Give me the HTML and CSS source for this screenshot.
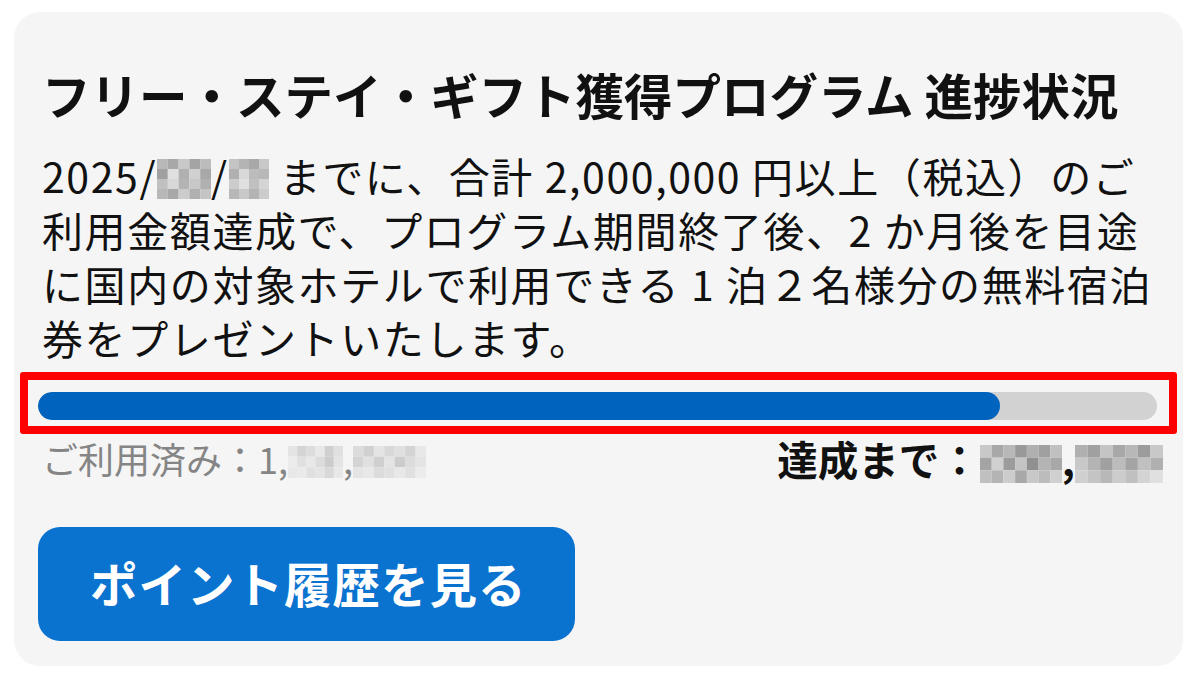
FILE: index.html
```html
<!DOCTYPE html>
<html lang="ja">
<head>
<meta charset="utf-8">
<title>フリー・ステイ・ギフト獲得プログラム 進捗状況</title>
<link rel="stylesheet" href="styles.css">
</head>
<body>
<div class="card">
  <h1 class="title">フリー・ステイ・ギフト獲得プログラム 進捗状況</h1>
  <p class="desc">2025/<svg class="mosaic m-a" width="54" height="40" viewBox="0 0 5 4" preserveAspectRatio="none"><rect x="0" y="0" width="1" height="1" fill="#b8b8b8"/><rect x="1" y="0" width="1" height="1" fill="#a8a8a8"/><rect x="2" y="0" width="1" height="1" fill="#c8c8c8"/><rect x="3" y="0" width="1" height="1" fill="#a4a4a4"/><rect x="4" y="0" width="1" height="1" fill="#bcbcbc"/><rect x="0" y="1" width="1" height="1" fill="#a0a0a0"/><rect x="1" y="1" width="1" height="1" fill="#e0e0e0"/><rect x="2" y="1" width="1" height="1" fill="#b0b0b0"/><rect x="3" y="1" width="1" height="1" fill="#d0d0d0"/><rect x="4" y="1" width="1" height="1" fill="#a8a8a8"/><rect x="0" y="2" width="1" height="1" fill="#c0c0c0"/><rect x="1" y="2" width="1" height="1" fill="#d8d8d8"/><rect x="2" y="2" width="1" height="1" fill="#b4b4b4"/><rect x="3" y="2" width="1" height="1" fill="#c8c8c8"/><rect x="4" y="2" width="1" height="1" fill="#b0b0b0"/><rect x="0" y="3" width="1" height="1" fill="#b8b8b8"/><rect x="1" y="3" width="1" height="1" fill="#a8a8a8"/><rect x="2" y="3" width="1" height="1" fill="#cccccc"/><rect x="3" y="3" width="1" height="1" fill="#b0b0b0"/><rect x="4" y="3" width="1" height="1" fill="#c4c4c4"/></svg>/<svg class="mosaic m-b" width="40" height="40" viewBox="0 0 4 4" preserveAspectRatio="none"><rect x="0" y="0" width="1" height="1" fill="#c4c4c4"/><rect x="1" y="0" width="1" height="1" fill="#b4b4b4"/><rect x="2" y="0" width="1" height="1" fill="#a8a8a8"/><rect x="3" y="0" width="1" height="1" fill="#c8c8c8"/><rect x="0" y="1" width="1" height="1" fill="#b0b0b0"/><rect x="1" y="1" width="1" height="1" fill="#d8d8d8"/><rect x="2" y="1" width="1" height="1" fill="#bcbcbc"/><rect x="3" y="1" width="1" height="1" fill="#b8b8b8"/><rect x="0" y="2" width="1" height="1" fill="#cccccc"/><rect x="1" y="2" width="1" height="1" fill="#e0e0e0"/><rect x="2" y="2" width="1" height="1" fill="#c0c0c0"/><rect x="3" y="2" width="1" height="1" fill="#d4d4d4"/><rect x="0" y="3" width="1" height="1" fill="#b8b8b8"/><rect x="1" y="3" width="1" height="1" fill="#c8c8c8"/><rect x="2" y="3" width="1" height="1" fill="#b4b4b4"/><rect x="3" y="3" width="1" height="1" fill="#cccccc"/></svg> までに、合計 2,000,000 円以上（税込）のご<br>利用金額達成で、プログラム期間終了後、2 か月後を目途<br>に国内の対象ホテルで利用できる 1 泊２名様分の無料宿泊<br>券をプレゼントいたします。</p>
  <div class="frame">
    <div class="track"><div class="fill" style="width: 86%"></div></div>
  </div>
  <div class="labels">
    <span class="used">ご利用済み：1,<svg class="mosaic" width="55" height="32" viewBox="0 0 6 3" preserveAspectRatio="none"><rect x="0" y="0" width="1" height="1" fill="#e4e4e4"/><rect x="1" y="0" width="1" height="1" fill="#d4d4d4"/><rect x="2" y="0" width="1" height="1" fill="#dcdcdc"/><rect x="3" y="0" width="1" height="1" fill="#e8e8e8"/><rect x="4" y="0" width="1" height="1" fill="#d0d0d0"/><rect x="5" y="0" width="1" height="1" fill="#e0e0e0"/><rect x="0" y="1" width="1" height="1" fill="#ececec"/><rect x="1" y="1" width="1" height="1" fill="#e0e0e0"/><rect x="2" y="1" width="1" height="1" fill="#e8e8e8"/><rect x="3" y="1" width="1" height="1" fill="#dcdcdc"/><rect x="4" y="1" width="1" height="1" fill="#cccccc"/><rect x="5" y="1" width="1" height="1" fill="#e4e4e4"/><rect x="0" y="2" width="1" height="1" fill="#e8e8e8"/><rect x="1" y="2" width="1" height="1" fill="#eaeaea"/><rect x="2" y="2" width="1" height="1" fill="#e0e0e0"/><rect x="3" y="2" width="1" height="1" fill="#e4e4e4"/><rect x="4" y="2" width="1" height="1" fill="#d8d8d8"/><rect x="5" y="2" width="1" height="1" fill="#e8e8e8"/></svg>,<svg class="mosaic" width="73" height="32" viewBox="0 0 7 3" preserveAspectRatio="none"><rect x="0" y="0" width="1" height="1" fill="#dcdcdc"/><rect x="1" y="0" width="1" height="1" fill="#d0d0d0"/><rect x="2" y="0" width="1" height="1" fill="#e4e4e4"/><rect x="3" y="0" width="1" height="1" fill="#d8d8d8"/><rect x="4" y="0" width="1" height="1" fill="#e0e0e0"/><rect x="5" y="0" width="1" height="1" fill="#d4d4d4"/><rect x="6" y="0" width="1" height="1" fill="#e8e8e8"/><rect x="0" y="1" width="1" height="1" fill="#d4d4d4"/><rect x="1" y="1" width="1" height="1" fill="#e0e0e0"/><rect x="2" y="1" width="1" height="1" fill="#d0d0d0"/><rect x="3" y="1" width="1" height="1" fill="#e4e4e4"/><rect x="4" y="1" width="1" height="1" fill="#cccccc"/><rect x="5" y="1" width="1" height="1" fill="#dcdcdc"/><rect x="6" y="1" width="1" height="1" fill="#e4e4e4"/><rect x="0" y="2" width="1" height="1" fill="#e4e4e4"/><rect x="1" y="2" width="1" height="1" fill="#e8e8e8"/><rect x="2" y="2" width="1" height="1" fill="#dcdcdc"/><rect x="3" y="2" width="1" height="1" fill="#e0e0e0"/><rect x="4" y="2" width="1" height="1" fill="#e8e8e8"/><rect x="5" y="2" width="1" height="1" fill="#e0e0e0"/><rect x="6" y="2" width="1" height="1" fill="#ececec"/></svg></span>
    <span class="remain">達成まで：<svg class="mosaic" width="82" height="38" viewBox="0 0 7 3" preserveAspectRatio="none"><rect x="0" y="0" width="1" height="1" fill="#c8c8c8"/><rect x="1" y="0" width="1" height="1" fill="#a8a8a8"/><rect x="2" y="0" width="1" height="1" fill="#b8b8b8"/><rect x="3" y="0" width="1" height="1" fill="#999999"/><rect x="4" y="0" width="1" height="1" fill="#b0b0b0"/><rect x="5" y="0" width="1" height="1" fill="#a0a0a0"/><rect x="6" y="0" width="1" height="1" fill="#c0c0c0"/><rect x="0" y="1" width="1" height="1" fill="#a4a4a4"/><rect x="1" y="1" width="1" height="1" fill="#d0d0d0"/><rect x="2" y="1" width="1" height="1" fill="#9c9c9c"/><rect x="3" y="1" width="1" height="1" fill="#c4c4c4"/><rect x="4" y="1" width="1" height="1" fill="#909090"/><rect x="5" y="1" width="1" height="1" fill="#b4b4b4"/><rect x="6" y="1" width="1" height="1" fill="#a8a8a8"/><rect x="0" y="2" width="1" height="1" fill="#c0c0c0"/><rect x="1" y="2" width="1" height="1" fill="#b4b4b4"/><rect x="2" y="2" width="1" height="1" fill="#cccccc"/><rect x="3" y="2" width="1" height="1" fill="#a8a8a8"/><rect x="4" y="2" width="1" height="1" fill="#c8c8c8"/><rect x="5" y="2" width="1" height="1" fill="#bcbcbc"/><rect x="6" y="2" width="1" height="1" fill="#d0d0d0"/></svg>,<svg class="mosaic" width="88" height="38" viewBox="0 0 7 3" preserveAspectRatio="none"><rect x="0" y="0" width="1" height="1" fill="#b0b0b0"/><rect x="1" y="0" width="1" height="1" fill="#a0a0a0"/><rect x="2" y="0" width="1" height="1" fill="#c4c4c4"/><rect x="3" y="0" width="1" height="1" fill="#a8a8a8"/><rect x="4" y="0" width="1" height="1" fill="#b8b8b8"/><rect x="5" y="0" width="1" height="1" fill="#9c9c9c"/><rect x="6" y="0" width="1" height="1" fill="#c8c8c8"/><rect x="0" y="1" width="1" height="1" fill="#c8c8c8"/><rect x="1" y="1" width="1" height="1" fill="#b4b4b4"/><rect x="2" y="1" width="1" height="1" fill="#a0a0a0"/><rect x="3" y="1" width="1" height="1" fill="#bcbcbc"/><rect x="4" y="1" width="1" height="1" fill="#a4a4a4"/><rect x="5" y="1" width="1" height="1" fill="#c0c0c0"/><rect x="6" y="1" width="1" height="1" fill="#b0b0b0"/><rect x="0" y="2" width="1" height="1" fill="#d0d0d0"/><rect x="1" y="2" width="1" height="1" fill="#c4c4c4"/><rect x="2" y="2" width="1" height="1" fill="#b8b8b8"/><rect x="3" y="2" width="1" height="1" fill="#cccccc"/><rect x="4" y="2" width="1" height="1" fill="#c0c0c0"/><rect x="5" y="2" width="1" height="1" fill="#d4d4d4"/><rect x="6" y="2" width="1" height="1" fill="#e0e0e0"/></svg></span>
  </div>
  <button class="btn" type="button">ポイント履歴を見る</button>
</div>
</body>
</html>
```

FILE: styles.css
```css
* {
  box-sizing: border-box;
}

html, body {
  margin: 0;
  padding: 0;
  background: #ffffff;
}

body {
  width: 1200px;
  height: 678px;
  overflow: hidden;
  font-family: "Noto Sans CJK JP", "Noto Sans", sans-serif;
  color: #111111;
}

.card {
  margin: 12px 17px 0 14px;
  height: 654px;
  background: #f5f5f5;
  border-radius: 26px;
  padding: 54px 20px 0 28px;
  display: flex;
  flex-direction: column;
  align-items: flex-start;
}

.title {
  margin: 0;
  font-size: 48.5px;
  line-height: 56px;
  font-weight: 700;
  white-space: nowrap;
  color: #111111;
}

.desc {
  margin: 26px 0 0 0;
  font-size: 41px;
  letter-spacing: 1.6px;
  line-height: 54px;
  font-weight: 400;
  white-space: nowrap;
  color: #111111;
}

.mosaic {
  display: inline-block;
  vertical-align: -6px;
}

.frame {
  margin: 8px 0 0 -22px;
  width: 1157px;
  border: 8px solid #ff0000;
  border-radius: 3px;
  padding: 12px 12px 6px 10px;
}

.track {
  height: 28px;
  background: #d2d2d2;
  border-radius: 14px;
  overflow: hidden;
}

.fill {
  height: 100%;
  background: #0064be;
  border-radius: 14px;
}

.labels {
  width: 1121px;
  display: flex;
  justify-content: space-between;
  align-items: center;
  margin-top: 2px;
  height: 44px;
}

.used {
  font-size: 36px;
  color: #858585;
  white-space: nowrap;
}

.used .mosaic {
  vertical-align: -4px;
}

.remain {
  font-size: 40.5px;
  font-weight: 700;
  color: #111111;
  white-space: nowrap;
}

.remain .mosaic {
  vertical-align: -7px;
}

.btn {
  margin: 47px 0 0 -4px;
  width: 537px;
  height: 114px;
  border: none;
  border-radius: 22px;
  background: #0a72cf;
  color: #ffffff;
  font-family: "Noto Sans CJK JP", "Noto Sans", sans-serif;
  font-size: 47.5px;
  font-weight: 700;
  text-align: left;
  padding: 0 0 4px 52px;
  letter-spacing: 1px;
}
```
